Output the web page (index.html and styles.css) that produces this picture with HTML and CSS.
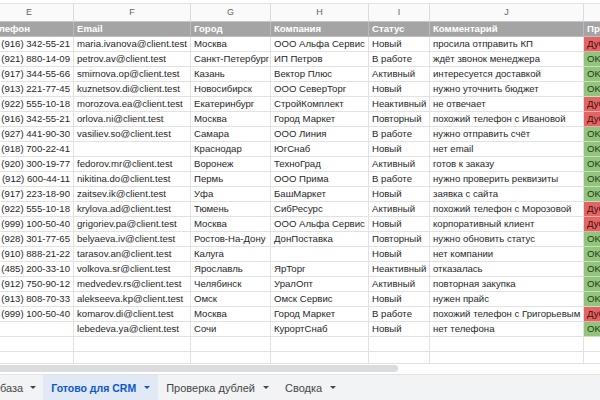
FILE: index.html
```html
<!DOCTYPE html>
<html lang="ru">
<head>
  <meta charset="UTF-8">
  <title>Клиенты — Готово для CRM</title>
  <link rel="stylesheet" href="styles.css">
</head>
<body>

  <!-- Таблица (прокручена вправо, колонка E обрезана) -->
  <div class="sheet">
    <div class="grid">
      <div class="row letters">
        <div class="cell">E</div>
        <div class="cell">F</div>
        <div class="cell">G</div>
        <div class="cell">H</div>
        <div class="cell">I</div>
        <div class="cell">J</div>
        <div class="cell">K</div>
      </div>
      <div class="row head">
        <div class="cell">Телефон</div>
        <div class="cell">Email</div>
        <div class="cell">Город</div>
        <div class="cell">Компания</div>
        <div class="cell">Статус</div>
        <div class="cell">Комментарий</div>
        <div class="cell">Проверка</div>
      </div>

      <div class="row"><div class="cell phone">(916) 342-55-21</div><div class="cell">maria.ivanova@client.test</div><div class="cell">Москва</div><div class="cell">ООО Альфа Сервис</div><div class="cell">Новый</div><div class="cell">просила отправить КП</div><div class="cell dup">Дубль</div></div>
      <div class="row"><div class="cell phone">(921) 880-14-09</div><div class="cell">petrov.av@client.test</div><div class="cell">Санкт-Петербург</div><div class="cell">ИП Петров</div><div class="cell">В работе</div><div class="cell">ждёт звонок менеджера</div><div class="cell ok">OK</div></div>
      <div class="row"><div class="cell phone">(917) 344-55-66</div><div class="cell">smirnova.op@client.test</div><div class="cell">Казань</div><div class="cell">Вектор Плюс</div><div class="cell">Активный</div><div class="cell">интересуется доставкой</div><div class="cell ok">OK</div></div>
      <div class="row"><div class="cell phone">(913) 221-77-45</div><div class="cell">kuznetsov.di@client.test</div><div class="cell">Новосибирск</div><div class="cell">ООО СеверТорг</div><div class="cell">Новый</div><div class="cell">нужно уточнить бюджет</div><div class="cell ok">OK</div></div>
      <div class="row"><div class="cell phone">(922) 555-10-18</div><div class="cell">morozova.ea@client.test</div><div class="cell">Екатеринбург</div><div class="cell">СтройКомплект</div><div class="cell">Неактивный</div><div class="cell">не отвечает</div><div class="cell dup">Дубль</div></div>
      <div class="row"><div class="cell phone">(916) 342-55-21</div><div class="cell">orlova.ni@client.test</div><div class="cell">Москва</div><div class="cell">Город Маркет</div><div class="cell">Повторный</div><div class="cell">похожий телефон с Ивановой</div><div class="cell dup">Дубль</div></div>
      <div class="row"><div class="cell phone">(927) 441-90-30</div><div class="cell">vasiliev.so@client.test</div><div class="cell">Самара</div><div class="cell">ООО Линия</div><div class="cell">В работе</div><div class="cell">нужно отправить счёт</div><div class="cell ok">OK</div></div>
      <div class="row"><div class="cell phone">(918) 700-22-41</div><div class="cell"></div><div class="cell">Краснодар</div><div class="cell">ЮгСнаб</div><div class="cell">Новый</div><div class="cell">нет email</div><div class="cell ok">OK</div></div>
      <div class="row"><div class="cell phone">(920) 300-19-77</div><div class="cell">fedorov.mr@client.test</div><div class="cell">Воронеж</div><div class="cell">ТехноГрад</div><div class="cell">Активный</div><div class="cell">готов к заказу</div><div class="cell ok">OK</div></div>
      <div class="row"><div class="cell phone">(912) 600-44-11</div><div class="cell">nikitina.do@client.test</div><div class="cell">Пермь</div><div class="cell">ООО Прима</div><div class="cell">В работе</div><div class="cell">нужно проверить реквизиты</div><div class="cell ok">OK</div></div>
      <div class="row"><div class="cell phone">(917) 223-18-90</div><div class="cell">zaitsev.ik@client.test</div><div class="cell">Уфа</div><div class="cell">БашМаркет</div><div class="cell">Новый</div><div class="cell">заявка с сайта</div><div class="cell ok">OK</div></div>
      <div class="row"><div class="cell phone">(922) 555-10-18</div><div class="cell">krylova.ad@client.test</div><div class="cell">Тюмень</div><div class="cell">СибРесурс</div><div class="cell">Активный</div><div class="cell">похожий телефон с Морозовой</div><div class="cell dup">Дубль</div></div>
      <div class="row"><div class="cell phone">(999) 100-50-40</div><div class="cell">grigoriev.pa@client.test</div><div class="cell">Москва</div><div class="cell">ООО Альфа Сервис</div><div class="cell">Новый</div><div class="cell">корпоративный клиент</div><div class="cell dup">Дубль</div></div>
      <div class="row"><div class="cell phone">(928) 301-77-65</div><div class="cell">belyaeva.iv@client.test</div><div class="cell">Ростов-На-Дону</div><div class="cell">ДонПоставка</div><div class="cell">Повторный</div><div class="cell">нужно обновить статус</div><div class="cell ok">OK</div></div>
      <div class="row"><div class="cell phone">(910) 888-21-22</div><div class="cell">tarasov.an@client.test</div><div class="cell">Калуга</div><div class="cell"></div><div class="cell">Новый</div><div class="cell">нет компании</div><div class="cell ok">OK</div></div>
      <div class="row"><div class="cell phone">(485) 200-33-10</div><div class="cell">volkova.sr@client.test</div><div class="cell">Ярославль</div><div class="cell">ЯрТорг</div><div class="cell">Неактивный</div><div class="cell">отказалась</div><div class="cell ok">OK</div></div>
      <div class="row"><div class="cell phone">(912) 750-90-12</div><div class="cell">medvedev.rs@client.test</div><div class="cell">Челябинск</div><div class="cell">УралОпт</div><div class="cell">Активный</div><div class="cell">повторная закупка</div><div class="cell ok">OK</div></div>
      <div class="row"><div class="cell phone">(913) 808-70-33</div><div class="cell">alekseeva.kp@client.test</div><div class="cell">Омск</div><div class="cell">Омск Сервис</div><div class="cell">Новый</div><div class="cell">нужен прайс</div><div class="cell ok">OK</div></div>
      <div class="row"><div class="cell phone">(999) 100-50-40</div><div class="cell">komarov.di@client.test</div><div class="cell">Москва</div><div class="cell">Город Маркет</div><div class="cell">В работе</div><div class="cell">похожий телефон с Григорьевым</div><div class="cell dup">Дубль</div></div>
      <div class="row"><div class="cell phone"></div><div class="cell">lebedeva.ya@client.test</div><div class="cell">Сочи</div><div class="cell">КурортСнаб</div><div class="cell">Новый</div><div class="cell">нет телефона</div><div class="cell ok">OK</div></div>

      <div class="row"><div class="cell"></div><div class="cell"></div><div class="cell"></div><div class="cell"></div><div class="cell"></div><div class="cell"></div><div class="cell"></div></div>
      <div class="row"><div class="cell"></div><div class="cell"></div><div class="cell"></div><div class="cell"></div><div class="cell"></div><div class="cell"></div><div class="cell"></div></div>
    </div>
  </div>

  <!-- Горизонтальная прокрутка -->
  <div class="scroll">
    <div class="thumb"></div>
  </div>

  <!-- Листы -->
  <div class="tabs">
    <div class="tab first">база <span class="caret"></span></div>
    <div class="tab active">Готово для CRM <span class="caret"></span></div>
    <div class="tab">Проверка дублей <span class="caret"></span></div>
    <div class="tab">Сводка <span class="caret"></span></div>
  </div>

</body>
</html>
```

FILE: styles.css
```css
body {
  margin: 0;
  width: 600px;
  height: 400px;
  overflow: hidden;
  background: #fff;
  font-family: 'Liberation Sans', Arial, sans-serif;
  color: #1f1f1f;
}

.sheet {
  height: 360px;
  padding-top: 3px;
  overflow: hidden;
  border-bottom: 1px solid #e1e1e1;
}

.grid {
  margin-left: -15px;
}

.row {
  display: grid;
  grid-template-columns: 89px 117px 80px 98px 61px 154px 80px;
  height: 15px;
}

.cell {
  box-sizing: border-box;
  padding: 0 3px;
  font-size: 9.6px;
  line-height: 14px;
  white-space: nowrap;
  overflow: hidden;
  border-right: 1px solid #e2e2e2;
  border-bottom: 1px solid #e2e2e2;
}

.phone {
  text-align: right;
  padding-right: 3px;
}

/* буквы колонок */
.letters {
  height: 18px;
  border-top: 1px solid #e3e3e3;
  background: #fafafa;
}

.letters .cell {
  text-align: center;
  color: #5f6368;
  font-size: 9px;
  line-height: 17px;
  border-right-color: #dcdcdc;
  border-bottom-color: #c4c4c4;
}

/* строка заголовков */
.head .cell {
  background: #a4a4a4;
  color: #fff;
  font-weight: bold;
  border-right-color: #b9b9b9;
  border-bottom-color: #bdbdbd;
}

.ok {
  background: #93c47d;
  color: #1d3b10;
  border-bottom-color: #c9e0bd;
}

.dup {
  background: #e06666;
  color: #4d0a0a;
  border-bottom-color: #eeaaaa;
}

.scroll {
  height: 9px;
  padding-top: 1px;
  background: #fff;
}

.thumb {
  width: 398px;
  height: 7px;
  background: #dadce0;
  border-radius: 0 4px 4px 0;
}

.tabs {
  display: flex;
  height: 25px;
  background: #f1f3f4;
  border-top: 1px solid #e3e3e3;
  border-bottom: 2px solid #d3d3d3;
}

.tab {
  display: flex;
  align-items: center;
  gap: 8px;
  padding: 0 8px;
  font-size: 11px;
  color: #444746;
}

.tab.first {
  padding-left: 0;
  gap: 7px;
  padding-right: 7px;
}

.tab.active {
  background: #e1e9f7;
  color: #0b57d0;
  font-weight: bold;
  font-size: 10.5px;
}

.caret {
  width: 0;
  height: 0;
  border-left: 3px solid transparent;
  border-right: 3px solid transparent;
  border-top: 3px solid #444746;
}

.tab.active .caret {
  border-top-color: #0b57d0;
}
```
